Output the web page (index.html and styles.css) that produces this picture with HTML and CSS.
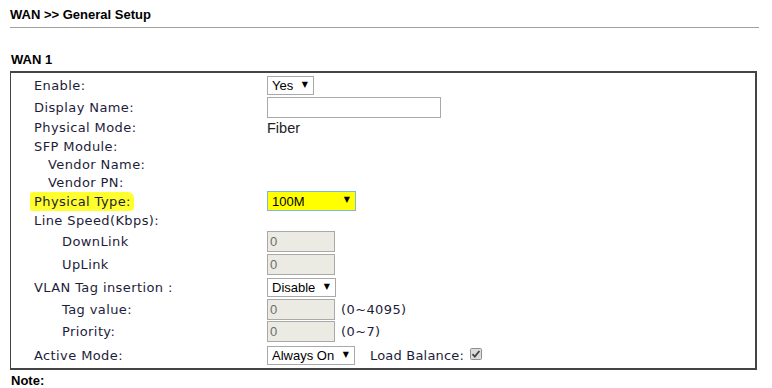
FILE: index.html
```html
<!DOCTYPE html>
<html lang="en">
<head>
    <meta charset="UTF-8">
    <title>WAN &gt;&gt; General Setup</title>
    <link rel="stylesheet" href="styles.css">
</head>
<body>
    <div class="page-title">WAN &gt;&gt; General Setup</div>
    <div class="section-title">WAN 1</div>
    <div class="wan-box">
        <div class="row h22">
            <div class="label">Enable:</div>
            <div class="value"><span class="sel"><select><option>Yes</option></select></span></div>
        </div>
        <div class="row h22">
            <div class="label">Display Name:</div>
            <div class="value"><input class="text wide" type="text"></div>
        </div>
        <div class="row h19">
            <div class="label">Physical Mode:</div>
            <div class="value plain">Fiber</div>
        </div>
        <div class="row">
            <div class="label">SFP Module:</div>
        </div>
        <div class="row">
            <div class="label sub">Vendor Name:</div>
        </div>
        <div class="row">
            <div class="label sub">Vendor PN:</div>
        </div>
        <div class="row h20">
            <div class="label"><span class="marker">Physical Type:</span></div>
            <div class="value"><span class="sel"><select class="yellow"><option>100M</option></select></span></div>
        </div>
        <div class="row h19">
            <div class="label">Line Speed(Kbps):</div>
        </div>
        <div class="row h23">
            <div class="label sub2">DownLink</div>
            <div class="value"><input class="text small" type="text" value="0" disabled></div>
        </div>
        <div class="row h23">
            <div class="label sub2">UpLink</div>
            <div class="value"><input class="text small" type="text" value="0" disabled></div>
        </div>
        <div class="row h22">
            <div class="label">VLAN Tag insertion :</div>
            <div class="value"><span class="sel"><select class="w68"><option>Disable</option></select></span></div>
        </div>
        <div class="row h22">
            <div class="label sub2">Tag value:</div>
            <div class="value"><input class="text small" type="text" value="0" disabled><span class="hint">(0~4095)</span></div>
        </div>
        <div class="row h23">
            <div class="label sub2">Priority:</div>
            <div class="value"><input class="text small" type="text" value="0" disabled><span class="hint">(0~7)</span></div>
        </div>
        <div class="row h24">
            <div class="label">Active Mode:</div>
            <div class="value">
                <span class="sel"><select class="w87"><option>Always On</option></select></span>
                <span class="lb">Load Balance:</span>
                <svg class="check" width="12" height="12" viewBox="0 0 12 12">
                    <rect x="0.5" y="0.5" width="11" height="11" rx="1" fill="#dcdcdc" stroke="#8e8f8f"/>
                    <path d="M2.5 6.2 L4.8 8.6 L9.4 3" fill="none" stroke="#444" stroke-width="1.8"/>
                </svg>
            </div>
        </div>
    </div>
    <div class="note">Note:</div>
</body>
</html>
```

FILE: styles.css
```css
body {
    margin: 0;
    padding: 7px 10px 0 10px;
    background: #fff;
    font-family: 'DejaVu Sans', Verdana, sans-serif;
    font-size: 13px;
    letter-spacing: 0.4px;
    color: #1d1d3a;
}
.page-title {
    font-family: 'Liberation Sans', Arial, sans-serif;
    font-weight: bold;
    font-size: 13px;
    letter-spacing: 0;
    color: #000;
    height: 20px;
    border-bottom: 1px solid #a0a0a0;
    width: 749px;
}
.section-title {
    font-family: 'Liberation Sans', Arial, sans-serif;
    font-weight: bold;
    font-size: 13px;
    letter-spacing: 0;
    color: #000;
    margin: 24px 0 0 1px;
    height: 19px;
}
.wan-box {
    width: 744px;
    border: 1px solid #444;
    border-top-width: 2px;
    border-right-width: 2px;
    border-bottom-width: 2px;
    padding: 1px 0 1px 0;
}
.row {
    display: flex;
    align-items: center;
    height: 18px;
}
.row.h19 { height: 19px; }
.row.h20 { height: 20px; }
.row.h22 { height: 22px; }
.row.h23 { height: 23px; }
.row.h24 { height: 24px; }
.label {
    width: 233px;
    padding-left: 23px;
    flex: none;
    white-space: nowrap;
}
.label.sub {
    padding-left: 37px;
    width: 219px;
}
.label.sub2 {
    padding-left: 51px;
    width: 205px;
}
.marker {
    background: #ffff2e;
    padding: 2px 3px 2px 4px;
    margin-left: -4px;
    border-radius: 3px 6px 4px 2px;
}
.value {
    display: flex;
    align-items: center;
}
.value.plain {
    font-family: 'Liberation Sans', Arial, sans-serif;
    font-size: 14.5px;
    letter-spacing: 0;
    color: #222;
}
.sel {
    position: relative;
    display: inline-block;
    letter-spacing: 0;
}
.sel::after {
    content: "\25BC";
    position: absolute;
    right: 6px;
    top: 4px;
    font-size: 8px;
    color: #000;
    pointer-events: none;
}
select {
    appearance: none;
    -webkit-appearance: none;
    font-family: 'Liberation Sans', Arial, sans-serif;
    font-size: 13px;
    color: #000;
    background: #fff;
    border: 1px solid #a9a9a9;
    height: 19px;
    width: 47px;
    padding: 0 0 0 4px;
    margin: 0;
    border-radius: 0;
}
select.yellow {
    background: #ffff00;
    border: 1px solid #7eb4ea;
    width: 89px;
    height: 20px;
}
select.w68 {
    width: 69px;
}
select.w87 {
    width: 88px;
}
input.text {
    box-sizing: border-box;
    font-family: 'Liberation Sans', Arial, sans-serif;
    font-size: 13px;
    letter-spacing: 0;
    border: 1px solid #a9a9a9;
    height: 21px;
    margin: 0;
    padding: 0 2px;
    background: #fff;
}
input.wide {
    width: 174px;
}
input.small {
    width: 68px;
    background: #ebebe4;
    color: #6d6d6d;
}
.hint {
    margin-left: 6px;
}
.lb {
    margin-left: 15px;
    margin-right: 6px;
    letter-spacing: 0.2px;
}
.check {
    display: block;
    margin-top: -3px;
}
.note {
    font-family: 'Liberation Sans', Arial, sans-serif;
    font-weight: bold;
    font-size: 13px;
    letter-spacing: 0;
    color: #000;
    margin: 3px 0 0 1px;
}
```
